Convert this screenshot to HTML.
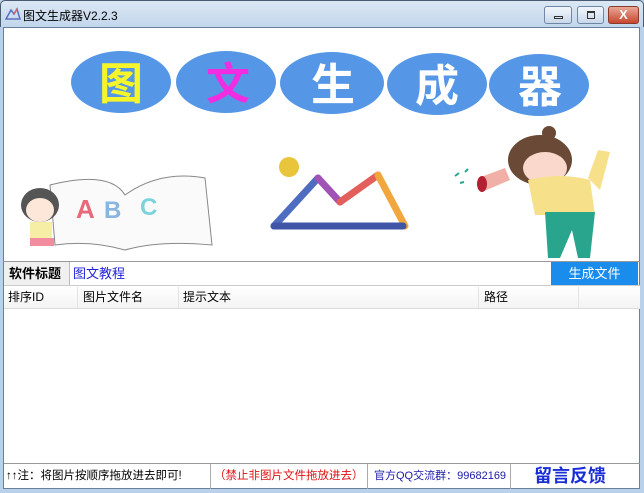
<!DOCTYPE html>
<html><head><meta charset="utf-8"><style>
*{margin:0;padding:0;box-sizing:border-box}
body{width:644px;height:493px;overflow:hidden;background:#b9d1ea;font-family:"Liberation Sans","Noto Sans CJK SC",sans-serif;position:relative}
.title{position:absolute;left:0;top:0;width:644px;height:27px;background:linear-gradient(#dbe7f4,#c2d6ec);border:1px solid #4a5a70;border-bottom:none;border-radius:5px 5px 0 0}
.title span{position:absolute;left:22px;top:6px;font-size:12px;color:#000}
.btn{position:absolute;top:5px;height:18px;border:1px solid #6f86a4;border-radius:3px;background:linear-gradient(#f2f6fb,#c9d8ea)}
.client{position:absolute;left:3px;top:27px;width:637px;height:462px;background:#fff;border:1px solid #6a7f9a}
.abs{position:absolute}
.hdr{position:absolute;top:286px;height:22px;font-size:12px;line-height:22px;color:#000}
.sb{position:absolute;top:464px;height:25px;font-size:11.5px;line-height:25px;white-space:nowrap}
</style></head><body>
<div class="title">
<svg class="abs" style="left:4px;top:5px" width="16" height="14"><path d="M1 13 L6 4 L9 8 L12 3 L15 13 Z" fill="none" stroke="#5a6fc0" stroke-width="1.5"/><path d="M9 8 L12 3" stroke="#e0605a" stroke-width="1.5"/></svg>
<span>图文生成器V2.2.3</span>
<div class="btn" style="left:543px;width:28px"><div class="abs" style="left:9px;top:9px;width:9px;height:3px;border:1px solid #333"></div></div>
<div class="btn" style="left:576px;width:27px"><div class="abs" style="left:9px;top:4px;width:8px;height:8px;border:1px solid #333;border-top-width:2px"></div></div>
<div class="btn" style="left:607px;width:31px;background:linear-gradient(#e8a796,#c7472f);border-color:#8a3a2a;color:#fff;font-weight:bold;font-size:13px;text-align:center;line-height:16px">X</div>
</div>
<div class="client"></div>
<svg class="abs" style="left:0;top:0" width="644" height="262">
<g fill="#5597e6">
<ellipse cx="121" cy="82" rx="50" ry="31"/><ellipse cx="226" cy="82" rx="50" ry="31"/><ellipse cx="332" cy="83" rx="52" ry="31"/><ellipse cx="437" cy="84" rx="50" ry="31"/><ellipse cx="539" cy="85" rx="50" ry="31"/>
</g>
<g font-family="Noto Sans CJK SC,sans-serif" font-size="44" font-weight="bold" text-anchor="middle">
<text x="121" y="99" fill="#f5f52a">图</text><text x="228" y="99" fill="#f22ce0">文</text><text x="333" y="100" fill="#fff">生</text><text x="437" y="101" fill="#fff">成</text><text x="540" y="102" fill="#fff">器</text>
</g>
<circle cx="289" cy="167" r="10" fill="#e9c53c"/>
<g fill="none" stroke-width="7" stroke-linecap="round" stroke-linejoin="round">
<path d="M274 226 L318 178" stroke="#4f6dc0"/><path d="M318 178 L340 202" stroke="#a052b5"/><path d="M340 202 L378 175" stroke="#e35f5c"/><path d="M378 175 L405 226" stroke="#f2a73e"/><path d="M274 226 L403 226" stroke="#3f55a8"/>
</g>
<path d="M50 185 Q110 170 125 195 Q160 170 205 178 L212 245 Q160 240 125 250 Q90 240 55 245 Z" fill="#fafafa" stroke="#888" stroke-width="1"/>
<text x="76" y="218" font-size="26" font-weight="bold" fill="#e86a7a" font-family="Liberation Sans">A</text>
<text x="104" y="218" font-size="24" font-weight="bold" fill="#88b6de" font-family="Liberation Sans">B</text>
<text x="140" y="215" font-size="24" font-weight="bold" fill="#7dd3dc" font-family="Liberation Sans">C</text>
<ellipse cx="40" cy="205" rx="19" ry="17" fill="#555"/><ellipse cx="40" cy="210" rx="14" ry="12" fill="#fde7d8"/>
<rect x="30" y="222" width="22" height="18" fill="#f7eea5"/><rect x="30" y="238" width="24" height="8" fill="#f28da0"/>
<circle cx="549" cy="133" r="7" fill="#6a4a36"/>
<ellipse cx="540" cy="160" rx="32" ry="25" fill="#6a4a36"/><ellipse cx="545" cy="168" rx="22" ry="16" fill="#fbd8cc"/>
<path d="M478 178 L505 168 L510 180 L482 192 Z" fill="#f0b0a8"/><ellipse cx="482" cy="184" rx="5" ry="8" fill="#b32032"/>
<path d="M528 180 Q560 172 590 180 L595 215 L535 215 Z" fill="#f7e08a"/>
<path d="M588 178 L598 150 L610 152 L600 190 Z" fill="#f7e08a"/>
<path d="M545 212 L595 212 L590 258 L578 258 L572 230 L560 258 L548 258 Z" fill="#2aa58d"/>
<path d="M455 176 l4 -3 M465 172 l3 -3 M460 183 l4 -1" stroke="#2aa58d" stroke-width="2"/>
</svg>
<div class="abs" style="left:3px;top:261px;width:637px;height:1px;background:#999"></div>
<div class="abs" style="left:4px;top:262px;width:66px;height:23px;background:#f0f0f0;border-right:1px solid #bbb;font-size:13px;font-weight:bold;line-height:23px;padding-left:5px">软件标题</div>
<div class="abs" style="left:73px;top:262px;font-size:13px;line-height:23px;color:#1f1fd8">图文教程</div>
<div class="abs" style="left:551px;top:262px;width:87px;height:23px;background:#1a8ceb;color:#fff;font-size:13px;line-height:23px;text-align:center">生成文件</div>
<div class="abs" style="left:4px;top:285px;width:636px;height:24px;background:linear-gradient(#fff,#f3f3f3);border-top:1px solid #ccc;border-bottom:1px solid #ddd"></div>
<div class="abs" style="left:77px;top:287px;width:1px;height:21px;background:#e3e3e3"></div>
<div class="abs" style="left:178px;top:287px;width:1px;height:21px;background:#e3e3e3"></div>
<div class="abs" style="left:478px;top:287px;width:1px;height:21px;background:#e3e3e3"></div>
<div class="abs" style="left:578px;top:287px;width:1px;height:21px;background:#e3e3e3"></div>
<div class="hdr" style="left:8px">排序ID</div><div class="hdr" style="left:83px">图片文件名</div><div class="hdr" style="left:183px">提示文本</div><div class="hdr" style="left:484px">路径</div>
<div class="abs" style="left:4px;top:463px;width:636px;height:1px;background:#999"></div>
<div class="abs" style="left:210px;top:464px;width:1px;height:25px;background:#aaa"></div>
<div class="abs" style="left:367px;top:464px;width:1px;height:25px;background:#aaa"></div>
<div class="abs" style="left:510px;top:464px;width:1px;height:25px;background:#aaa"></div>
<div class="sb" style="left:6px">↑↑注：将图片按顺序拖放进去即可!</div>
<div class="sb" style="left:214px;color:#e01010">（禁止非图片文件拖放进去）</div>
<div class="sb" style="left:374px;color:#1a1aa8;font-size:11px">官方QQ交流群：99682169</div>
<div class="sb" style="left:534px;color:#1a2ed8;font-size:18px;font-weight:bold">留言反馈</div>
</body></html>
